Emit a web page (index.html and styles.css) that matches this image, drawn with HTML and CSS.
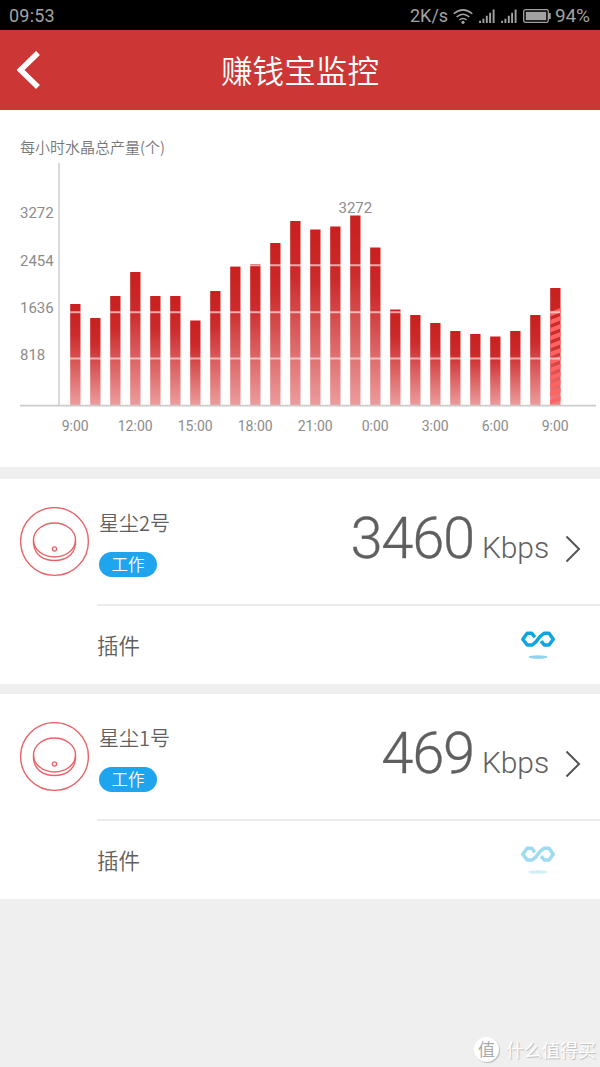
FILE: index.html
```html
<!DOCTYPE html>
<html lang="zh-CN">
<head>
<meta charset="utf-8">
<title>赚钱宝监控</title>
<link rel="stylesheet" href="styles.css">
</head>
<body>
<svg class="defs" width="0" height="0">
  <symbol id="signal" viewBox="0 0 16 14">
    <path d="M1.1 14v-2.2M4.4 14v-4.2M7.8 14V6.8M11.1 14V3.8M14.6 14V.5" stroke="currentColor" stroke-width="1.9"/>
  </symbol>
  <symbol id="device" viewBox="0 0 70 70">
    <g fill="none" stroke="#e76468" stroke-width="1.4">
      <circle cx="34.500" cy="34.500" r="33.900"/>
      <ellipse cx="34.500" cy="33" rx="21" ry="17"/>
      <path d="M13.500 33v4C15 48.500 24 53.500 34.500 53.500s19.500-5 21-16.500V33"/>
      <circle cx="34.500" cy="42" r="2.100"/>
    </g>
  </symbol>
  <symbol id="plugin" viewBox="0 0 36 30">
    <path d="M14.800 8.200L11.800 4.300H7.200L2.800 10.200 7.200 16h5L16 12.800 20 7.500 24 4.300h5l4.300 5.900L29 16h-4.800L21.200 12.200" fill="none" stroke="#10a5e0" stroke-width="3.500" stroke-linejoin="round"/>
    <ellipse cx="18" cy="28" rx="9.500" ry="1.800" fill="#8fd3ee"/>
  </symbol>
</svg>

<header class="status">
  <span class="clock">09:53</span>
  <span class="rate">2K/s</span>
  <svg class="wifi" viewBox="0 0 20 15"><g fill="none" stroke="currentColor" stroke-width="1.500"><path d="M.7 4.800Q10-3 19.300 4.800M3.600 8Q10 2.500 16.400 8M6.400 11Q10 8 13.600 11"/></g><circle cx="10" cy="13.300" r="1.600" fill="currentColor"/></svg>
  <svg class="signal"><use href="#signal"/></svg>
  <svg class="signal"><use href="#signal"/></svg>
  <svg class="battery" viewBox="0 0 28 14"><rect x=".7" y=".7" width="24.600" height="12.600" rx="1.800" fill="none" stroke="currentColor" stroke-width="1.300"/><rect x="2.800" y="2.800" width="20.400" height="8.400" fill="currentColor"/><path d="M26.700 4v6" stroke="currentColor" stroke-width="2"/></svg>
  <span class="level">94%</span>
</header>

<nav class="titlebar">
  <svg class="back" viewBox="0 0 24 38"><path d="M21 2L3.500 19 21 36" fill="none" stroke="#fff" stroke-width="5.500"/></svg>
  <h1 class="title">赚钱宝监控</h1>
</nav>

<section class="chart">
  <h2 class="chart-title">每小时水晶总产量(个)</h2>
  <svg class="plot" viewBox="0 160 600 280" id="plot">
    <defs>
      <linearGradient id="bar" x1="0" y1="0" x2="0" y2="1">
        <stop offset="0" stop-color="#c91f1f"/><stop offset=".3" stop-color="#cc2a2b"/><stop offset="1" stop-color="#ec9c9d"/>
      </linearGradient>
      <linearGradient id="current" x1="0" y1="0" x2="0" y2="1">
        <stop offset="0" stop-color="#c91f1f"/><stop offset=".5" stop-color="#c93030"/><stop offset="1" stop-color="#f08080"/>
      </linearGradient>
    </defs>
    <path d="M59 163V405" stroke="#ccc" stroke-width="1.500"/>
    <g id="bars"></g>
    <path d="M60 265.300H560M60 312.300H560M60 358.500H560" stroke="#fff" stroke-opacity=".6" stroke-width="2"/>
    <path d="M20 405.700H596" stroke="#ccc" stroke-width="1.700"/>
    <g class="y-labels">
      <text x="20" y="218">3272</text><text x="20" y="266">2454</text>
      <text x="20" y="313">1636</text><text x="20" y="359.500">818</text>
      <text x="338.500" y="213">3272</text>
    </g>
    <g class="x-labels" id="hours"></g>
  </svg>
</section>

<section class="card">
  <svg class="device"><use href="#device"/></svg>
  <div class="body">
    <div class="summary">
      <div class="identity"><span class="name">星尘2号</span><span class="pill">工作</span></div>
      <div class="speed"><span class="value">3460</span><span class="unit">Kbps</span></div>
      <svg class="more" viewBox="0 0 16 28"><path d="M1.500 1.500L14 14 1.500 26.500" fill="none" stroke="#555" stroke-width="2"/></svg>
    </div>
    <div class="plugins"><span>插件</span><svg class="plugin"><use href="#plugin"/></svg></div>
  </div>
</section>

<section class="card">
  <svg class="device"><use href="#device"/></svg>
  <div class="body">
    <div class="summary">
      <div class="identity"><span class="name">星尘1号</span><span class="pill">工作</span></div>
      <div class="speed"><span class="value">469</span><span class="unit">Kbps</span></div>
      <svg class="more" viewBox="0 0 16 28"><path d="M1.500 1.500L14 14 1.500 26.500" fill="none" stroke="#555" stroke-width="2"/></svg>
    </div>
    <div class="plugins"><span>插件</span><svg class="plugin idle"><use href="#plugin"/></svg></div>
  </div>
</section>

<footer class="watermark"><span class="seal">值</span><span>什么值得买</span></footer>
<script src="chart.js"></script>
</body>
</html>
```

FILE: styles.css
```css
* { box-sizing: border-box; }
body {
  margin: 0;
  width: 600px;
  height: 1067px;
  display: flex;
  flex-direction: column;
  overflow: hidden;
  background: #efefef;
  color: #5f5f5f;
  font-family: "Noto Sans CJK SC", sans-serif;
  font-weight: 350;
}
svg { display: block; flex: none; }
.defs { position: absolute; }

.status {
  height: 30px;
  flex: none;
  display: flex;
  align-items: center;
  padding: 2px 8px 0 9px;
  background: #000;
  color: #a2a2a2;
  font: 400 18px/28px Roboto, sans-serif;
}
.clock { flex: 1; letter-spacing: .2px; }
.rate { width: 43px; }
.wifi { width: 20px; height: 15px; margin-right: 6px; }
.signal { width: 16px; height: 14px; margin-right: 6px; }
.battery { width: 28px; height: 14px; margin-right: 4px; }
.level { width: 37px; font-size: 19px; letter-spacing: -.2px; }

.titlebar {
  height: 80px;
  flex: none;
  display: grid;
  grid-template-columns: 60px 1fr 60px;
  align-items: center;
  background: #cc3736;
}
.back { width: 24px; height: 38px; margin-left: 17px; }
.title { margin: -3px 0 0; text-align: center; color: #fff; font-size: 31.6px; line-height: 46px; font-weight: 350; }

.chart { height: 357px; flex: none; padding-top: 24px; background: #fff; }
.chart-title { margin: 0 0 0 20px; height: 26px; line-height: 25px; font-size: 15px; font-weight: 350; color: #777; }
.plot { width: 600px; height: 280px; }
.y-labels { font: 15px Roboto, sans-serif; fill: #8c8c8c; }
.x-labels { font: 14px Roboto, sans-serif; fill: #8c8c8c; text-anchor: middle; }

.card { height: 205px; flex: none; display: flex; background: #fff; margin-top: 12px; }
.card + .card { margin-top: 10px; }
.device { width: 70px; height: 70px; margin: 28px 7px 0 20px; }
.body { flex: 1; display: flex; flex-direction: column; }
.summary { height: 127px; display: flex; padding-right: 19px; border-bottom: 2px solid #ebebeb; }
.identity { flex: 1; display: flex; flex-direction: column; align-items: flex-start; padding: 29px 0 0 2px; }
.name { font-size: 20px; line-height: 29px; }
.pill {
  width: 58px;
  height: 25px;
  margin: 15px 0 0;
  border-radius: 13px;
  background: #1ea5ed;
  color: #fff;
  font-size: 16.5px;
  line-height: 25px;
  text-align: center;
}
.speed { display: flex; align-items: baseline; padding-top: 25px; font-family: Roboto, sans-serif; font-weight: 300; }
.value { font-size: 58px; line-height: 68px; letter-spacing: -1.3px; -webkit-text-stroke: .3px #5f5f5f; }
.unit { font-size: 30px; margin-left: 8px; letter-spacing: -.1px; }
.more { width: 16px; height: 28px; margin: 56px 0 0 16px; }
.plugins { flex: 1; display: flex; align-items: center; justify-content: space-between; padding: 0 44px 0 0; font-size: 21.5px; line-height: 32px; }
.plugin { width: 36px; height: 30px; margin-top: -2px; }
.idle { opacity: .4; }

.watermark {
  margin: auto 4px 4px auto;
  height: 28px;
  display: flex;
  align-items: center;
  gap: 7px;
  color: #fff;
  font-size: 18px;
  font-weight: 400;
  text-shadow: 1px 1px 1px #bbb;
}
.seal {
  width: 25px;
  height: 25px;
  border-radius: 50%;
  background: #fff;
  color: #aaa;
  font-size: 17px;
  line-height: 24px;
  text-align: center;
  text-shadow: none;
  box-shadow: 1px 1px 1px #bbb;
}
```

FILE: chart.js
```js
const NS = "http://www.w3.org/2000/svg";
const BASELINE = 405;
const heights = [101, 87, 109, 133, 109, 109, 84.5, 114, 138.5, 141, 162, 184, 175.5,
  178.5, 189.5, 157.5, 95.5, 90, 82, 74, 71, 68.5, 74, 90, 117];
const bars = document.getElementById("bars");
const hours = document.getElementById("hours");

function add(parent, tag, attrs) {
  const el = document.createElementNS(NS, tag);
  for (const key in attrs) el.setAttribute(key, attrs[key]);
  parent.appendChild(el);
  return el;
}

heights.forEach((height, i) => {
  const x = 70.2 + i * 20;
  const current = i === heights.length - 1;
  add(bars, "rect", { x, y: BASELINE - height, width: 10.3, height, fill: current ? "url(#current)" : "url(#bar)" });
  // The hour in progress is hatched.
  if (current) {
    for (let y = 312; y < BASELINE - 4; y += 8) {
      add(bars, "path", { d: `M${x} ${y}l10.3-4v4.6l-10.3 4z`, fill: "#ff6363" });
    }
  }
  if (i % 3 === 0) {
    add(hours, "text", { x: x + 5, y: 430.5 }).textContent = ((9 + i) % 24) + ":00";
  }
});
```
